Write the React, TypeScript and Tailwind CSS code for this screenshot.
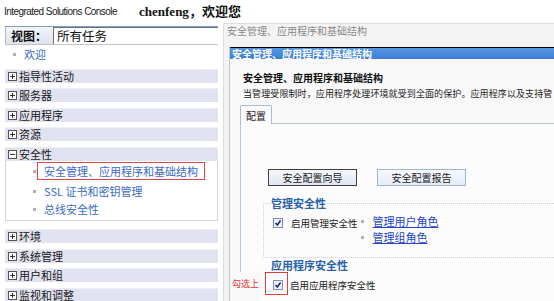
import React from 'react';

const cjk = "font-['Noto_Sans_CJK_SC',sans-serif]";

const BoxIcon: React.FC<{ open?: boolean }> = ({ open }) => (
  <svg width="9" height="9" viewBox="0 0 9 9" className="shrink-0">
    <rect x="0.5" y="0.5" width="8" height="8" fill="#fff" stroke="#555" />
    <path d="M2 4.5h5" stroke="#333" />
    {!open && <path d="M4.5 2v5" stroke="#333" />}
  </svg>
);

const Check: React.FC = () => (
  <svg width="10" height="10" viewBox="0 0 10 10" className="shrink-0">
    <rect x="0.5" y="0.5" width="9" height="9" fill="#eef1f7" stroke="#7f8fae" />
    <path d="M2.5 5 L4.3 7 L7.6 2.6" fill="none" stroke="#1b2a7a" strokeWidth="1.6" />
  </svg>
);

const Bullet: React.FC<{ className?: string }> = ({ className = '' }) => (
  <span className={`inline-block w-[3px] h-[3px] bg-[#b0b0b0] shrink-0 ${className}`} />
);

const Group: React.FC<{ label: string; open?: boolean }> = ({ label, open }) => (
  <div className="flex items-center h-[14px] bg-[#e0e2f0] border-t border-[#eceef8] pl-[3px] gap-[2px] text-[11px] leading-none text-[#1a1a1a]">
    <BoxIcon open={open} />
    <span>{label}</span>
  </div>
);

const SubItem: React.FC<{ label: string; active?: boolean }> = ({ label, active }) => (
  <div className="flex items-center h-[18px]">
    <Bullet className="ml-[27px]" />
    <span
      className={`ml-[1px] h-[18px] flex items-center border px-[6px] text-[11px] leading-none text-[#3a6bc6] ${
        active ? 'border-[#e04545]' : 'border-transparent'
      }`}
    >
      {label}
    </span>
  </div>
);

export default function App() {
  return (
    <div className={`w-[554px] h-[301px] overflow-hidden bg-white flex flex-col ${cjk}`}>
      {/* header */}
      <div className="h-[23px] flex items-center shrink-0">
        <span className="ml-[4px] font-['Liberation_Sans',sans-serif] text-[10px] tracking-[-0.55px] text-[#222]">
          Integrated Solutions Console
        </span>
        <span className="ml-[22px] text-[13px] font-bold text-[#111]">
          <span className="font-['Liberation_Serif',serif]">chenfeng</span>，欢迎您
        </span>
      </div>

      <div className="flex flex-1 min-h-0">
        {/* left navigation */}
        <div className="w-[218px] shrink-0 pl-[5px] pt-[3px]">
          <div className="flex h-[19px] border-t border-[#7f9fd3] border-b border-b-[#c4c4c4]">
            <div className="w-[48px] flex items-center pl-[5px] bg-gradient-to-b from-[#f3f5fa] to-[#dde3ef] border-l border-[#a9b8d6] text-[12px] font-bold text-[#111]">
              视图：
            </div>
            <div className="flex-1 flex items-center pl-[3px] bg-white border-t border-l border-[#707070] text-[12.5px] text-[#111]">
              所有任务
            </div>
          </div>
          <div className="flex items-center h-[16px] mt-[1px] pl-[8px]">
            <Bullet />
            <span className="ml-[8px] text-[11px] leading-none text-[#3a6bc6]">欢迎</span>
          </div>

          <div className="flex flex-col gap-[5.5px] mt-[6.5px]">
            <Group label="指导性活动" />
            <Group label="服务器" />
            <Group label="应用程序" />
            <Group label="资源" />
            <div>
              <Group label="安全性" open />
              <div className="border border-t-0 border-[#d6d6d6] pt-[1.5px] pb-[2px]">
                <SubItem label="安全管理、应用程序和基础结构" active />
                <div className="mt-[2px]">
                  <SubItem label="SSL 证书和密钥管理" />
                </div>
                <SubItem label="总线安全性" />
              </div>
            </div>
            <div className="mt-[2.5px] flex flex-col gap-[5.5px]">
              <Group label="环境" />
              <Group label="系统管理" />
              <Group label="用户和组" />
              <Group label="监视和调整" />
            </div>
          </div>
        </div>

        <div className="w-[5px] shrink-0" />

        {/* right content */}
        <div className="flex-1 min-w-0 flex flex-col border-l border-t border-[#dcdcdc] bg-[#f3f3f3] pl-[3px] overflow-hidden">
          <div className="pt-[1px] leading-[12px] text-[10px] text-[#8a8a8a] whitespace-nowrap">
            安全管理、应用程序和基础结构
          </div>

          <div className="mt-[10px] ml-[2px] flex-1 flex flex-col border-l border-[#c8c8c8]">
            <div className="h-[12px] border-t border-black bg-gradient-to-b from-[#5596e2] to-[#3c7ed3] pl-[2px] text-[10px] leading-[11px] font-bold text-white whitespace-nowrap">
              安全管理、应用程序和基础结构
            </div>

            <div className="flex-1 flex flex-col bg-[#f8f8f8] pl-[10px] pt-[13px]">
              <div className="ml-[3px] text-[10px] leading-[12px] font-bold text-[#111] whitespace-nowrap">
                安全管理、应用程序和基础结构
              </div>
              <div className="ml-[3px] mt-[4px] text-[9px] tracking-[0.1px] leading-[12px] text-[#222] whitespace-nowrap">
                当管理受限制时，应用程序处理环境就受到全面的保护。应用程序以及支持管
              </div>

              <div className="flex mt-[5px]">
                <div className="w-[32px] h-[19px] border border-b-0 border-[#a9bde0] rounded-t-[2px] bg-[#fbfbfb] pl-[5px] pt-[4px] text-[10px] leading-[12px] text-[#222]">
                  配置
                </div>
                <div className="flex-1 h-[19px] border-b border-[#b5c6e6]" />
              </div>

              <div className="flex-1 border-l border-[#b5c6e6] bg-[#fcfcfc] pl-[22px] pt-[45px]">
                <div className="flex gap-[20px] ml-[5px]">
                  <div className="w-[89px] h-[17px] border border-[#404040] bg-gradient-to-b from-[#f6f8fc] to-[#dfe6f3] text-center text-[10px] leading-[15px] text-[#222]">
                    安全配置向导
                  </div>
                  <div className="w-[89px] h-[17px] border border-[#9fb3d4] bg-gradient-to-b from-[#f6f8fc] to-[#e6ecf7] text-center text-[10px] leading-[15px] text-[#222]">
                    安全配置报告
                  </div>
                </div>

                <fieldset className="mt-[11px] border border-dotted border-r-0 border-[#cfcfcf] pl-[9px] pb-[12px]">
                  <legend className="-ml-[2px] text-[11px] leading-[12px] font-bold text-[#2a62a8]">管理安全性</legend>
                  <div className="flex items-start mt-[4px]">
                    <div className="mt-[5px]">
                      <Check />
                    </div>
                    <span className="ml-[8px] mt-[3px] text-[9.5px] leading-[14px] text-[#222]">启用管理安全性</span>
                    <div className="ml-[3px] flex flex-col">
                      <div className="flex items-center h-[16px]">
                        <Bullet />
                        <span className="ml-[9px] text-[11px] leading-none text-[#2844c8] underline">管理用户角色</span>
                      </div>
                      <div className="flex items-center h-[16px]">
                        <Bullet />
                        <span className="ml-[9px] text-[11px] leading-none text-[#2844c8] underline">管理组角色</span>
                      </div>
                    </div>
                  </div>
                </fieldset>

                <div className="ml-[8px] mt-[1px] text-[11px] leading-[12px] font-bold text-[#2a62a8]">应用程序安全性</div>
                <div className="relative flex items-center mt-[1px]">
                  <span className="absolute left-[-32px] top-0 h-[29px] pt-[6px] px-[1px] bg-[#f8f8f8] text-[9px] leading-[12px] text-[#e8322e]">
                    勾选上
                  </span>
                  <div className="ml-[2px] w-[23px] h-[23px] border border-[#e03a3a] pl-[7px] pt-[7px]">
                    <Check />
                  </div>
                  <span className="ml-[2px] mt-[3px] text-[9.5px] leading-[14px] text-[#222]">启用应用程序安全性</span>
                </div>
              </div>
            </div>
          </div>
        </div>
      </div>
    </div>
  );
}
